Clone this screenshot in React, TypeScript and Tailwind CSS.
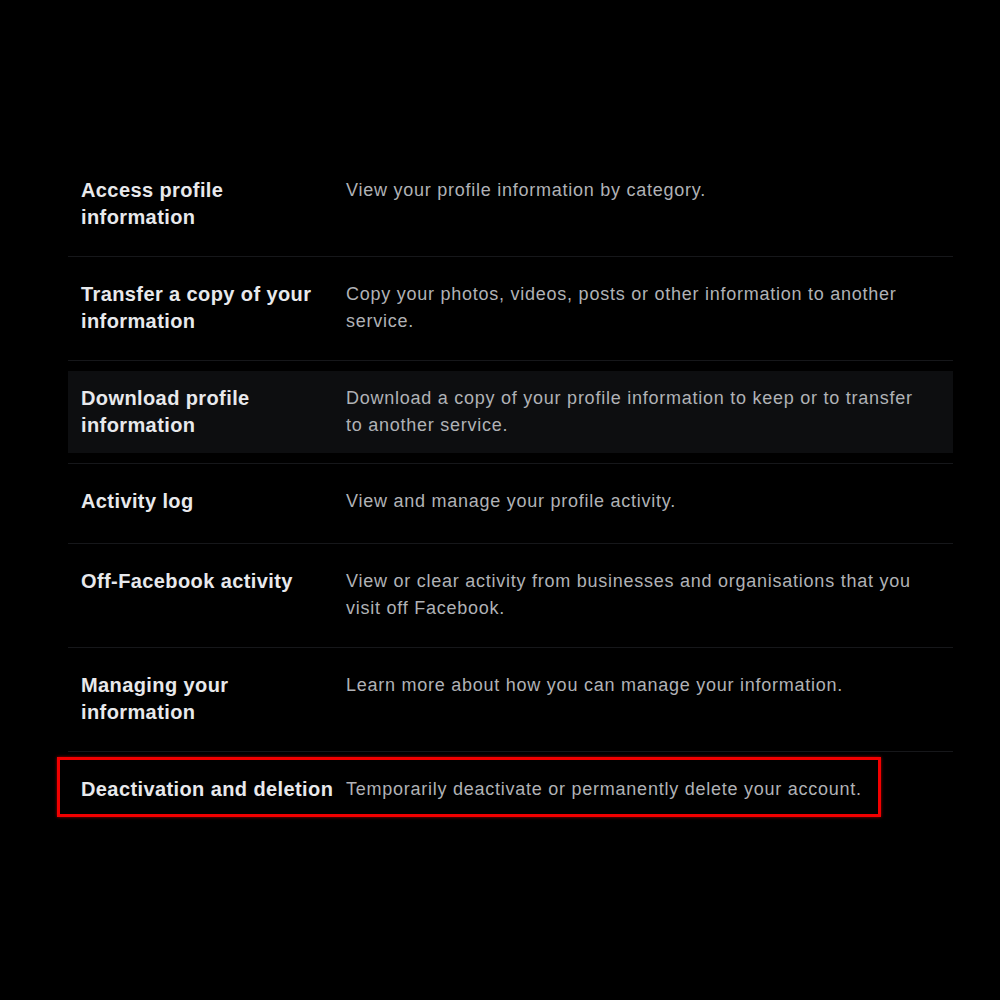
const ROWS: { title: string; desc: string; highlight?: boolean; flagged?: boolean }[] = [
  { title: 'Access profile information', desc: 'View your profile information by category.' },
  { title: 'Transfer a copy of your information', desc: 'Copy your photos, videos, posts or other information to another service.' },
  {
    title: 'Download profile information',
    desc: 'Download a copy of your profile information to keep or to transfer to another service.',
    highlight: true,
  },
  { title: 'Activity log', desc: 'View and manage your profile activity.' },
  { title: 'Off-Facebook activity', desc: 'View or clear activity from businesses and organisations that you visit off Facebook.' },
  { title: 'Managing your information', desc: 'Learn more about how you can manage your information.' },
  { title: 'Deactivation and deletion', desc: 'Temporarily deactivate or permanently delete your account.', flagged: true },
]

function RowContent({ title, desc }: { title: string; desc: string }) {
  return (
    <div className="flex pl-[13px]">
      <div className="w-[265px] shrink-0 pr-[10px] text-[20px] leading-[27px] tracking-[0.4px] font-bold text-[#e8e9ec]">{title}</div>
      <div className="w-[580px] text-[18px] leading-[27px] tracking-[0.75px] text-[#b0b2b6]">{desc}</div>
    </div>
  )
}

export default function App() {
  return (
    <div className="w-full h-[1000px] bg-black pt-[153px]" style={{ fontFamily: '"Liberation Sans", Arial, sans-serif' }}>
      <div className="ml-[68px] w-[885px]">
        {ROWS.map((row, i) => {
          const last = i === ROWS.length - 1
          if (row.highlight) {
            return (
              <div key={row.title} className="py-[10px] border-b border-[#16171a]">
                <div className="bg-[#0d0e10] py-[14px]">
                  <RowContent title={row.title} desc={row.desc} />
                </div>
              </div>
            )
          }
          return (
            <div
              key={row.title}
              className={`relative min-h-[80px] pt-6 pb-[25px] ${last ? '' : 'border-b border-[#16171a]'}`}
            >
              <RowContent title={row.title} desc={row.desc} />
              {row.flagged && (
                <div className="absolute left-[-11px] top-[5px] w-[824px] h-[60px] border-[3px] border-[#f20000] shadow-[0_0_3px_rgba(255,0,0,0.6)] pointer-events-none" />
              )}
            </div>
          )
        })}
      </div>
    </div>
  )
}
